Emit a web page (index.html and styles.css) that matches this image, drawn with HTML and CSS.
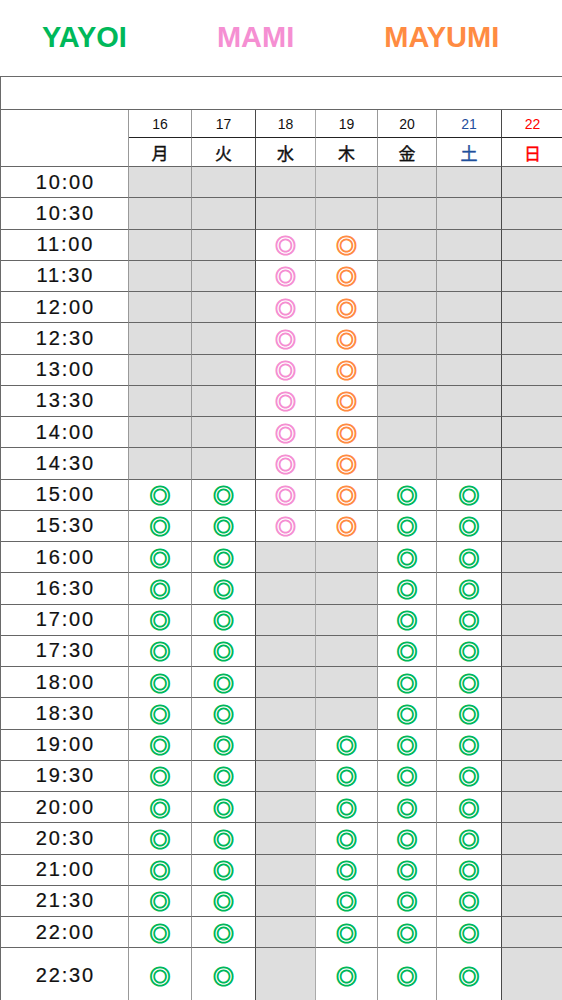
FILE: index.html
```html
<!DOCTYPE html>
<html lang="ja">
<head>
    <meta charset="UTF-8">
    <meta name="viewport" content="width=device-width, initial-scale=1.0">
    <title>シフト表</title>
    <link rel="stylesheet" href="styles.css">
</head>
<body>
    <div class="page">
        <div class="members">
            <span class="member yayoi">YAYOI</span>
            <span class="member mami">MAMI</span>
            <span class="member mayumi">MAYUMI</span>
        </div>
        <div class="schedule" id="schedule">
            <div class="cell blank-row"></div>
            <div class="cell corner"></div>
            <div class="cell date d1">16</div>
            <div class="cell date d2">17</div>
            <div class="cell date d3">18</div>
            <div class="cell date d4">19</div>
            <div class="cell date d5">20</div>
            <div class="cell date d6 sat">21</div>
            <div class="cell date d7 sun">22</div>
            <div class="cell day d1">月</div>
            <div class="cell day d2">火</div>
            <div class="cell day d3">水</div>
            <div class="cell day d4">木</div>
            <div class="cell day d5">金</div>
            <div class="cell day d6 sat">土</div>
            <div class="cell day d7 sun">日</div>
        </div>
    </div>

    <script>
        // g = 休み, Y = YAYOI, M = MAMI, U = MAYUMI
        const rows = [
            ["10:00", "ggggggg"],
            ["10:30", "ggggggg"],
            ["11:00", "ggMUggg"],
            ["11:30", "ggMUggg"],
            ["12:00", "ggMUggg"],
            ["12:30", "ggMUggg"],
            ["13:00", "ggMUggg"],
            ["13:30", "ggMUggg"],
            ["14:00", "ggMUggg"],
            ["14:30", "ggMUggg"],
            ["15:00", "YYMUYYg"],
            ["15:30", "YYMUYYg"],
            ["16:00", "YYggYYg"],
            ["16:30", "YYggYYg"],
            ["17:00", "YYggYYg"],
            ["17:30", "YYggYYg"],
            ["18:00", "YYggYYg"],
            ["18:30", "YYggYYg"],
            ["19:00", "YYgYYYg"],
            ["19:30", "YYgYYYg"],
            ["20:00", "YYgYYYg"],
            ["20:30", "YYgYYYg"],
            ["21:00", "YYgYYYg"],
            ["21:30", "YYgYYYg"],
            ["22:00", "YYgYYYg"],
            ["22:30", "YYgYYYg"],
        ];

        const marks = { Y: "yayoi", M: "mami", U: "mayumi" };
        const schedule = document.getElementById("schedule");

        rows.forEach(([time, slots]) => {
            const t = document.createElement("div");
            t.className = "cell time";
            t.textContent = time;
            schedule.appendChild(t);

            [...slots].forEach((s, i) => {
                const c = document.createElement("div");
                c.className = `cell slot d${i + 1}`;
                if (s === "g") {
                    c.classList.add("off");
                } else {
                    const m = document.createElement("span");
                    m.className = `mark ${marks[s]}`;
                    m.textContent = "◎";
                    c.appendChild(m);
                }
                schedule.appendChild(c);
            });
        });
    </script>
</body>
</html>
```

FILE: styles.css
```css
html, body {
    margin: 0;
    padding: 0;
    overflow: hidden;
}

body {
    font-family: "Liberation Sans", Arial, "Noto Sans CJK JP", sans-serif;
    background-color: #fff;
    color: #111;
}

.page {
    width: 562px;
    overflow: hidden;
}

.members {
    display: flex;
    align-items: center;
    gap: 90px;
    height: 76px;
    padding-left: 42px;
    padding-bottom: 1px;
    box-sizing: border-box;
    font-family: "Liberation Sans", Arial, sans-serif;
    font-weight: 700;
    font-size: 29px;
}

.yayoi {
    color: #00b85a;
}

.mami {
    color: #f58fd2;
}

.mayumi {
    color: #ff8b42;
}

.schedule {
    display: grid;
    grid-template-columns: 128px 63px 64px 60px 62px 59px 65px 62px;
    grid-template-rows: 33px 28px 29px repeat(25, 31.25px) 56px;
    width: max-content;
    border-top: 1px solid #6a6a6a;
    border-left: 1px solid #6a6a6a;
}

.cell {
    box-sizing: border-box;
    display: flex;
    align-items: center;
    justify-content: center;
    border-right: 1px solid #8c8c8c;
    border-bottom: 1px solid #666;
}

.blank-row {
    grid-column: 1 / -1;
    border-right: none;
}

.corner {
    grid-row: span 2;
    border-right-color: #999;
}

.date {
    font-size: 14px;
    border-bottom-color: #222;
}

.day {
    font-size: 17px;
    font-family: "Noto Sans CJK JP", sans-serif;
    -webkit-text-stroke: 0.4px currentColor;
}

.sat {
    color: #1f4f9c;
}

.sun {
    color: #f00;
}

.time {
    font-size: 20px;
    letter-spacing: 1.8px;
    padding-left: 1.8px;
    border-right-color: #999;
    -webkit-text-stroke: 0.2px currentColor;
}

.off {
    background-color: #dedede;
}

.d1 { border-right-color: #999; }
.d2 { border-right-color: #4a4a4a; }
.d3 { border-right-color: #aaa; }
.d4 { border-right-color: #999; }
.d5 { border-right-color: #999; }
.d6 { border-right-color: #4a4a4a; }
.d7 { border-right-color: #999; }

.mark {
    font-family: "Noto Sans CJK JP", sans-serif;
    font-size: 21px;
    line-height: 1;
    -webkit-text-stroke: 1px currentColor;
}
```
